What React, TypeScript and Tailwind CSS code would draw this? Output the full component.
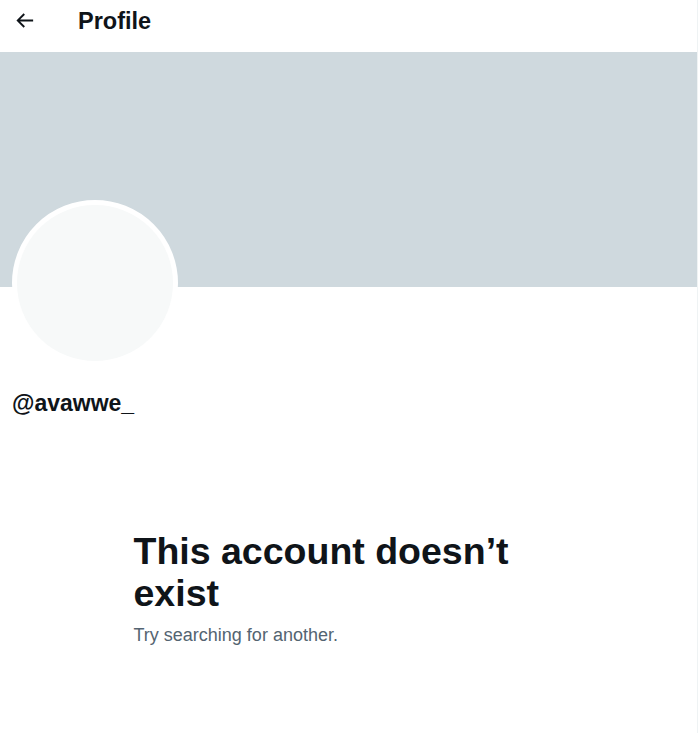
import React from 'react';

export default function App() {
  return (
    <div className="min-h-[733px] bg-white" style={{ fontFamily: '"Liberation Sans", Arial, sans-serif' }}>
      <div className="w-[698px] min-h-[733px] border-r border-[#eff3f4] text-[#0f1419]">
        {/* header */}
        <div className="h-[52px]">
          <div className="flex h-[41px] items-center">
            <button className="ml-[12px] flex h-[24px] w-[24px] items-center justify-center">
              <svg viewBox="0 0 24 24" className="h-[23px] w-[23px] fill-[#0f1419]">
                <path d="M7.414 13l5.043 5.04-1.414 1.42L3.586 12l7.457-7.46 1.414 1.42L7.414 11H21v2H7.414z" />
              </svg>
            </button>
            <h2 className="ml-[42px] text-[23.5px] font-bold leading-[28px]">Profile</h2>
          </div>
        </div>

        {/* banner */}
        <div className="h-[235px] w-full bg-[#cfd9de]" />

        {/* avatar + handle */}
        <div className="px-[12px]">
          <div className="-mt-[87px] h-[166px] w-[166px] rounded-full border-[5px] border-white bg-[#f7f9f9]" />
          <div className="mt-[23px] text-[23px] font-bold leading-[28px]">@avawwe_</div>
        </div>

        {/* empty state */}
        <div className="mx-auto mt-[113px] w-[430px]">
          <h1 className="text-[37.5px] font-bold leading-[42px]">This account doesn’t exist</h1>
          <p className="mt-[9px] text-[18px] leading-[24px] text-[#536471]">Try searching for another.</p>
        </div>
      </div>
    </div>
  );
}
